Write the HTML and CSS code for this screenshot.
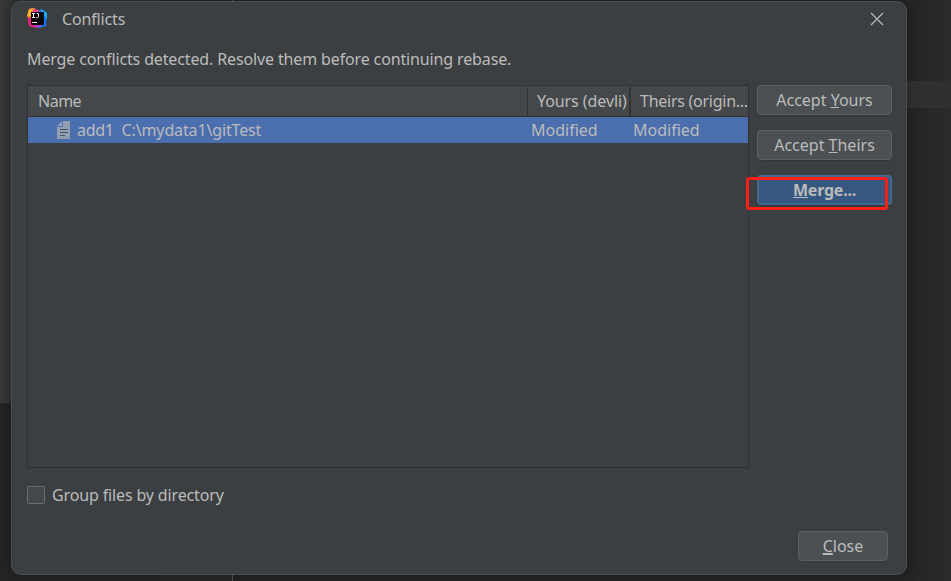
FILE: index.html
```html
<!DOCTYPE html>
<html lang="en">
<head>
<meta charset="utf-8">
<title>Conflicts</title>
<link rel="stylesheet" href="styles.css">
</head>
<body>
<div class="backdrop">
  <div class="side-panel"></div>
  <div class="top-panel"></div>
  <div class="bottom-panel"></div>
  <div class="editor-line"></div>
</div>
<main class="dialog">
  <header class="titlebar">
    <svg class="logo" width="22" height="22" viewBox="0 0 22 22">
      <path d="M2 1 7 0 11 3 8 19 3 18 1 15 3 12 0 9Z" fill="#f2603e"/>
      <path d="M2 1 7 0 9 4 3 9 0 8Z" fill="#fcae2d"/>
      <path d="M1 11 5 9 12 17 9 20 2 18Z" fill="#f51a83"/>
      <path d="M6 1 12 2 15 6 5 7Z" fill="#f8407d"/>
      <path d="M14 1 20 5 19 18 12 20 8 17 12 3Z" fill="#087cfa"/>
      <path d="M14 1 20 5 20 11 15 5Z" fill="#12b5f5"/>
      <path d="M7 17h8l-3 3-4-1Z" fill="#a044d0"/>
      <path d="M4 4h13v13H4Z" fill="#090509"/>
      <path d="M5 5.5h3M6.5 5.5v4M5 9.5h3M9.5 5.5h2v3.2q0 .8-.8.8h-1.5M5 14.5h5" fill="none" stroke="#f1e9ed" stroke-width="1"/>
    </svg>
    <h1 class="title">Conflicts</h1>
    <svg class="dismiss" width="14" height="14" viewBox="0 0 14 14"><path d="m1 1 12 12M13 1 1 13" stroke="#b9bbbc" stroke-width="1.2"/></svg>
  </header>
  <p class="message">Merge conflicts detected. Resolve them before continuing rebase.</p>
  <div class="content">
    <div class="table">
      <div class="row head">
        <div class="cell name"><span class="t-name">Name</span></div>
        <div class="cell yours"><span class="t-yours">Yours (devli)</span></div>
        <div class="cell theirs"><span class="t-theirs">Theirs (origin...</span></div>
      </div>
      <div class="row selected">
        <div class="cell name">
          <svg class="file" width="14" height="18" viewBox="0 0 14 18">
            <path d="M6 0h7v18H0V6h6Z" fill="#919fb1"/><path d="M5 0v5H0Z" fill="#8d9fbd"/>
            <path d="M3 8.5h8M3 11.5h8M3 14.5h5" stroke="#40536c" stroke-width="1.2"/>
          </svg>
          <span class="t-file">add1</span><span class="t-path">C:\mydata1\gitTest</span>
        </div>
        <div class="cell yours"><span>Modified</span></div>
        <div class="cell theirs"><span>Modified</span></div>
      </div>
    </div>
    <div class="actions">
      <button class="button"><span>Accept <u>Y</u>ours</span></button>
      <button class="button"><span class="t-at">Accept <u>T</u>heirs</span></button>
      <button class="button primary"><span class="t-merge"><u>M</u>erge...</span><i class="highlight"></i></button>
    </div>
  </div>
  <label class="group"><span class="checkbox"></span><span class="t-group">Group files by directory</span></label>
  <footer class="footer"><button class="button close"><span><u>C</u>lose</span></button></footer>
</main>
</body>
</html>
```
FILE: styles.css
```css
* { box-sizing: border-box; }
body { margin: 0; width: 951px; height: 581px; overflow: hidden; background: #2b2b2b; color: #bbbbbb; font: 16px/22px "Noto Sans", "Open Sans", sans-serif; }
.backdrop { position: absolute; inset: 0; z-index: -1; background: linear-gradient(90deg, #242424 0, #242424 905px, #2b2b2b 951px); }
.backdrop div { position: absolute; }
.side-panel { left: 0; top: 0; width: 159px; height: 404px; background: linear-gradient(90deg, #37393a, #303233 11px); border-bottom: 1px solid #292929; }
.top-panel { left: 900px; top: 81px; width: 51px; height: 27px; background: #303030; }
.bottom-panel { left: 159px; bottom: 0; width: 73px; height: 8px; background: #252628; }
.editor-line { left: 232px; top: 0; width: 1px; height: 581px; background: #555; }
.dialog { display: flex; flex-direction: column; width: 896px; height: 574px; margin: 1px 0 0 11px; padding: 0 14px 0 15px; border: 1px solid #4b4e50; border-radius: 10px; background: #3c3f41; box-shadow: 0 0 14px rgba(0,0,0,.25); }
.titlebar { display: flex; align-items: flex-start; height: 36px; padding-top: 6px; }
.title { margin: 0 auto 0 13px; font-size: 16px; font-weight: 400; line-height: 22px; letter-spacing: -.15px; }
.dismiss { margin: 4px 8px 0 0; }
.message { margin: 9px 0 14px; height: 24px; line-height: 24px; letter-spacing: -.135px; white-space: nowrap; }
.content { display: flex; justify-content: space-between; height: 383px; }
.table { width: 722px; border: 1px solid #2f3133; }
.row { display: grid; grid-template-columns: 499px 102px 119px; height: 26px; white-space: nowrap; }
.head { height: 31px; background: #45484a; border-bottom: 1px solid #2f3133; }
.cell { display: flex; align-items: center; padding-left: 4px; }
.head .cell { margin-top: 1px; padding: 0 0 2px 9px; border-left: 1px solid #303335; }
.head .name { border-left: 0; padding-left: 10px; }
.head .theirs { border-left-width: 2px; }
.selected { background: #4b6eaf; }
.selected .name { padding-left: 29px; }
.file { margin-right: 6px; }
.t-name { letter-spacing: -.5px; }
.t-yours { letter-spacing: -.08px; }
.t-theirs { letter-spacing: -.26px; }
.t-file { letter-spacing: -.3px; }
.t-path { margin-left: 8px; letter-spacing: -.14px; }
.t-merge { letter-spacing: -.2px; }
.t-group { letter-spacing: -.14px; }
.actions { display: flex; flex-direction: column; gap: 15px; width: 135px; }
.button { position: relative; display: flex; align-items: center; justify-content: center; height: 30px; padding: 0; border: 1px solid #5e6060; border-radius: 4px; background: #4c5052; color: #bbbbbb; font: inherit; box-shadow: 0 1px 1px #35383a; white-space: nowrap; }
.button u { text-underline-offset: 1px; text-decoration-thickness: 1px; text-decoration-skip-ink: none; }
.primary { background: #365880; border: 2px solid #43698e; font-weight: 700; }
.highlight { position: absolute; left: -13px; top: 0; width: 142px; height: 33px; border: 3px solid #ff1f17; border-radius: 3px; }
.group { display: flex; align-items: center; height: 24px; margin-top: 15px; }
.checkbox { width: 18px; height: 18px; margin-right: 7px; border: 1px solid #6b6b6b; border-radius: 2px; background: #43494a; }
.footer { display: flex; justify-content: flex-end; margin-top: 24px; padding-right: 4px; }
.close { width: 90px; }
.close u { text-decoration-thickness: 2px; }
```
